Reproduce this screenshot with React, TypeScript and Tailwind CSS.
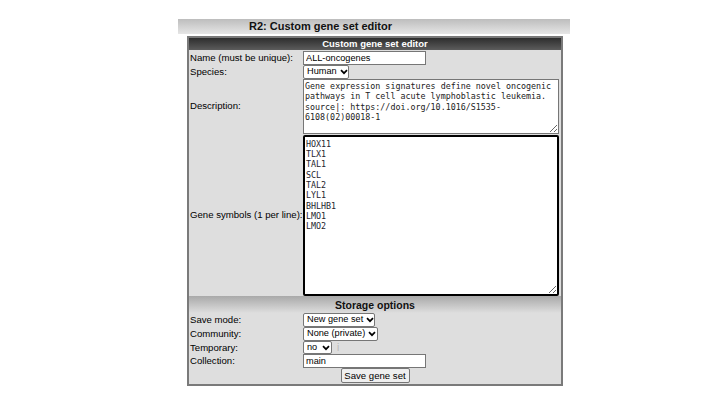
import React from "react";

const lbl = "text-[9.6px] leading-none whitespace-nowrap text-black pl-[1px] flex items-center";
const font = { fontFamily: '"Liberation Sans", Arial, sans-serif' };
const mono = { fontFamily: '"DejaVu Sans Mono", "Liberation Mono", monospace' };

function Chevron() {
  return (
    <svg width="8" height="6" viewBox="0 0 8 6" className="ml-[3px] shrink-0">
      <path d="M1 1.2 L4 4.2 L7 1.2" fill="none" stroke="#000" strokeWidth="1.7" />
    </svg>
  );
}

function Sel({ text, w }: { text: string; w: string }) {
  return (
    <div className={`h-[14px] ${w} bg-white border border-[#767676] rounded-[2px] flex items-center pl-[3px] text-[9.2px] leading-none whitespace-nowrap overflow-hidden text-black`}>
      <span>{text}</span>
      <Chevron />
    </div>
  );
}

export default function App() {
  return (
    <div className="w-[720px] h-[416px] bg-white relative" style={font}>
      <div className="pt-[19px] pl-[178px]">
        <div className="w-[392px] h-[15px] bg-gradient-to-b from-[#bdbdbd] to-[#e6e6e6] flex items-center pl-[71px] text-[11px] leading-none font-bold text-[#111] whitespace-nowrap">
          R2: Custom gene set editor
        </div>
      </div>
      <div className="ml-[187px] mt-[2px] w-[376px] border-2 border-[#7a7a7a] bg-[#dedede]">
        <div className="h-[12px] bg-gradient-to-b from-[#2e2e2e] to-[#5c5c5c] text-white text-[9.5px] leading-none font-bold flex items-center justify-center whitespace-nowrap">
          Custom gene set editor
        </div>
        <div className="grid grid-cols-[114px_1fr]">
          <div className={`${lbl} h-[15px]`}>Name (must be unique):</div>
          <div className="h-[15px] flex items-center">
            <input
              readOnly
              value="ALL-oncogenes"
              className="w-[123px] h-[14px] bg-white border border-[#767676] px-[2px] text-[9.2px] leading-none text-black outline-none"
              style={font}
            />
          </div>
          <div className={`${lbl} h-[13px]`}>Species:</div>
          <div className="h-[13px] flex items-center">
            <Sel text="Human" w="w-[46px]" />
          </div>
          <div className={`${lbl} h-[56px]`}>Description:</div>
          <div className="h-[56px] flex items-center pr-[2px]">
            <textarea
              readOnly
              value={"Gene expression signatures define novel oncogenic pathways in T cell acute lymphoblastic leukemia. source|: https://doi.org/10.1016/S1535-6108(02)00018-1"}
              className="w-full h-[55px] bg-white border border-[#767676] px-[1px] py-[1px] text-[8.35px] leading-[10.5px] text-[#222] outline-none resize-y"
              style={mono}
            />
          </div>
          <div className={`${lbl} h-[162px]`}>Gene symbols (1 per line):</div>
          <div className="h-[162px] flex items-center pr-[2px]">
            <textarea
              readOnly
              value={"HOX11\nTLX1\nTAL1\nSCL\nTAL2\nLYL1\nBHLHB1\nLMO1\nLMO2"}
              className="w-full h-[161px] bg-white border-2 border-black rounded-[2px] pl-[1px] pt-[2px] text-[8.35px] leading-[10.35px] text-[#1e1e2e] outline-none resize-y"
              style={mono}
            />
          </div>
        </div>
        <div className="h-[17px] bg-gradient-to-b from-[#a9a9a9] to-[#dedede] text-[10.5px] leading-none font-bold text-[#111] flex items-end justify-center pb-[3px] whitespace-nowrap">
          Storage options
        </div>
        <div className="grid grid-cols-[114px_1fr]">
          <div className={`${lbl} h-[14px]`}>Save mode:</div>
          <div className="h-[14px] flex items-center">
            <Sel text="New gene set" w="w-[72px]" />
          </div>
          <div className={`${lbl} h-[14px]`}>Community:</div>
          <div className="h-[14px] flex items-center">
            <Sel text="None (private)" w="w-[75px]" />
          </div>
          <div className={`${lbl} h-[13px]`}>Temporary:</div>
          <div className="h-[13px] flex items-center">
            <div className="h-[13px] w-[29px] bg-white border border-[#767676] rounded-[2px] flex items-center pl-[3px] text-[9.2px] leading-none text-black overflow-hidden">
              <span>no</span>
              <span className="ml-[2px] flex"><Chevron /></span>
            </div>
            <span className="ml-[5px] text-[10px] leading-none text-[#b8b8b8]">i</span>
          </div>
          <div className={`${lbl} h-[14px]`}>Collection:</div>
          <div className="h-[14px] flex items-center">
            <input
              readOnly
              value="main"
              className="w-[123px] h-[14px] bg-white border border-[#767676] px-[2px] text-[9.2px] leading-none text-black outline-none"
              style={font}
            />
          </div>
        </div>
        <div className="h-[16px] flex items-start justify-center">
          <div className="h-[15px] w-[69px] bg-[#efefef] border border-[#767676] rounded-[2px] flex items-center justify-center text-[9.6px] leading-none whitespace-nowrap text-black">
            Save gene set
          </div>
        </div>
      </div>
    </div>
  );
}
